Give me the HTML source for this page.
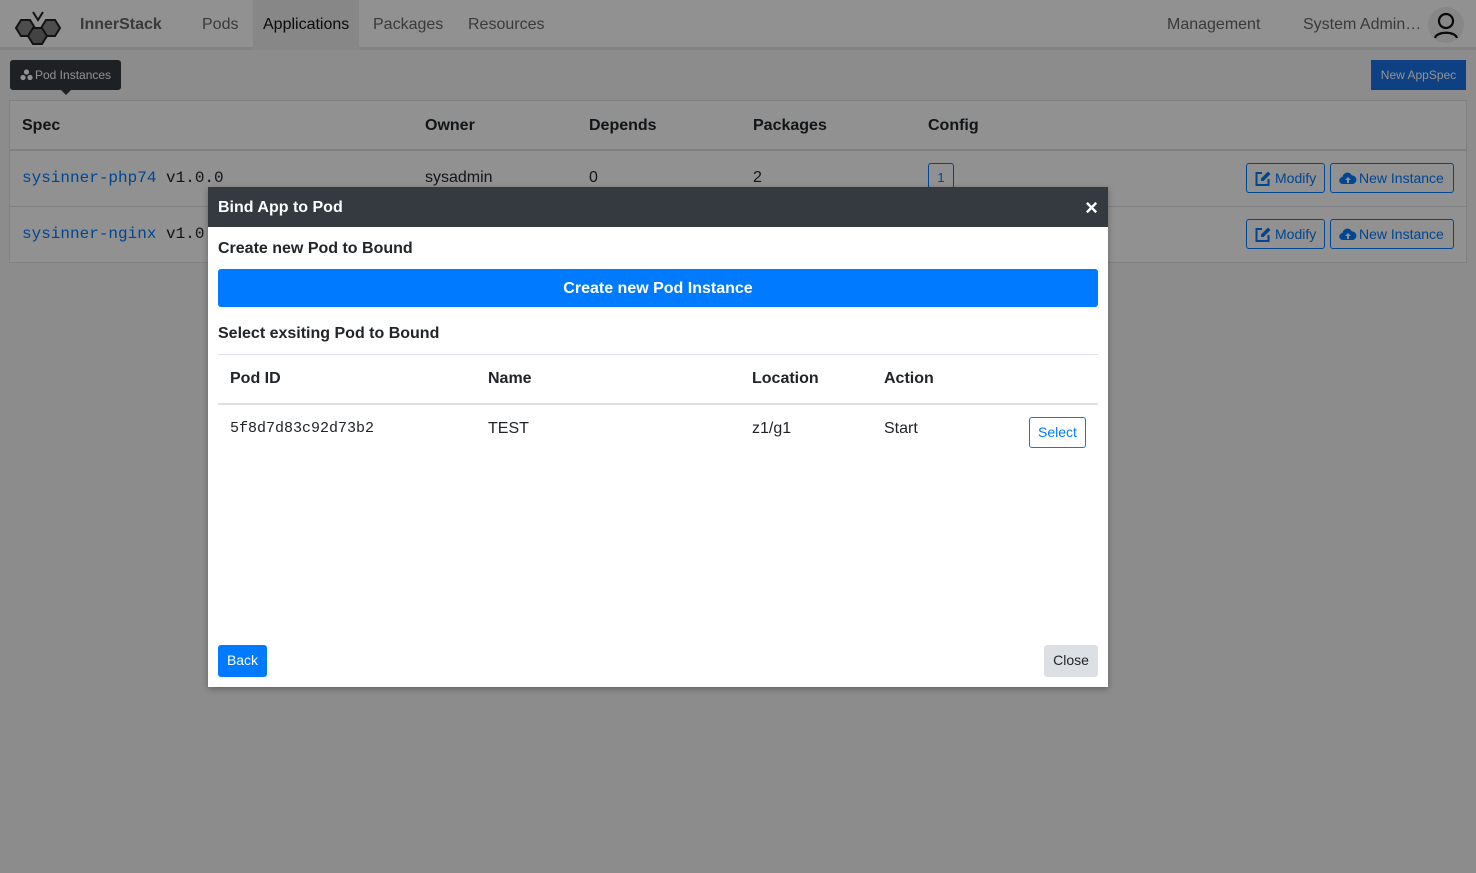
<!DOCTYPE html>
<html><head><style>
*{box-sizing:border-box;margin:0;padding:0}
body{width:1476px;height:873px;overflow:hidden;background:#f7f7f7;font-family:"Liberation Sans",sans-serif;color:#212529;position:relative;font-size:16px}
.nav{position:absolute;left:0;top:0;width:1476px;height:50px;background:#fff;border-bottom:3px solid #e6e6e6}
.nav span{position:absolute;top:16px;font-size:16px;color:#666}
.mono{font-family:"Liberation Mono",monospace}
.tbl{position:absolute;left:9px;top:100px;width:1458px;height:163px;background:#fff;border:1px solid #e3e3e3}
.th{position:absolute;top:16px;font-weight:bold}
.btn{position:absolute;border:1px solid #007bff;color:#007bff;border-radius:3px;font-size:14px;height:30px;line-height:28px;padding-left:28px}
.btn svg{position:absolute;left:8px;top:7px}
.ov{position:absolute;left:0;top:0;width:1476px;height:873px;background:rgba(0,0,0,.43)}
.modal{position:absolute;left:208px;top:187px;width:900px;height:500px;background:#fff;box-shadow:0 2px 6px rgba(0,0,0,.3)}
.mh{height:40px;background:#343a40;color:#fff;font-weight:bold;font-size:16px;padding:12px 10px}
.mb{position:absolute;font-size:16px}
</style></head><body>
<div class="nav">
<svg style="position:absolute;left:12px;top:8px" width="52" height="38" viewBox="0 0 52 38"><path d="M21 4l5 8 5-8" stroke="#222" stroke-width="2" fill="none"/><polygon points="4,20 9,12 18,12 23,20 18,28 9,28" fill="#888" stroke="#222" stroke-width="2"/><polygon points="29,20 34,12 43,12 48,20 43,28 34,28" fill="#888" stroke="#222" stroke-width="2"/><polygon points="16,28 21,20 30,20 35,28 30,36 21,36" fill="#777" stroke="#222" stroke-width="2"/></svg>
<span style="left:80px;font-weight:bold;font-size:16px">InnerStack</span>
<span style="left:202px">Pods</span>
<div style="position:absolute;left:253px;top:0;width:106px;height:50px;background:#eee"></div>
<span style="left:263px;color:#111">Applications</span>
<span style="left:373px">Packages</span>
<span style="left:468px">Resources</span>
<span style="left:1167px">Management</span>
<span style="left:1303px">System Admin…</span>
<svg style="position:absolute;left:1428px;top:7px" width="36" height="36" viewBox="0 0 36 36"><circle cx="18" cy="18" r="18" fill="#eee"/><circle cx="18" cy="14" r="7" stroke="#111" stroke-width="2.2" fill="none"/><path d="M7 31c2-7 20-7 22 0" stroke="#111" stroke-width="2.2" fill="none"/></svg>
</div>
<div style="position:absolute;left:10px;top:60px;width:111px;height:30px;background:#343a40;color:#fff;font-size:12px;line-height:30px;padding-left:25px;border-radius:3px">Pod Instances
<svg style="position:absolute;left:10px;top:9px" width="13" height="12" viewBox="0 0 13 12"><circle cx="6.5" cy="3" r="2.6" fill="#fff"/><circle cx="3" cy="8.5" r="2.6" fill="#fff"/><circle cx="10" cy="8.5" r="2.6" fill="#fff"/></svg></div>
<div style="position:absolute;left:61px;top:90px;border:5px solid transparent;border-top-color:#343a40"></div>
<div style="position:absolute;left:1371px;top:60px;width:95px;height:30px;background:#1a73e8;color:#fff;font-size:12px;line-height:30px;text-align:center">New AppSpec</div>
<div class="tbl">
<div class="th" style="left:12px">Spec</div><div class="th" style="left:415px">Owner</div><div class="th" style="left:579px">Depends</div><div class="th" style="left:743px">Packages</div><div class="th" style="left:918px">Config</div>
<div style="position:absolute;left:0;top:48px;width:100%;border-top:2px solid #dee2e6"></div>
<div style="position:absolute;left:0;top:105px;width:100%;border-top:1px solid #dee2e6"></div>
<div class="mono" style="position:absolute;left:12px;top:68px"><span style="color:#007bff">sysinner-php74</span> v1.0.0</div>
<div style="position:absolute;left:415px;top:68px">sysadmin</div><div style="position:absolute;left:579px;top:68px">0</div><div style="position:absolute;left:743px;top:68px">2</div>
<div style="position:absolute;left:918px;top:62px;width:26px;height:28px;border:1px solid #007bff;color:#007bff;font-size:13px;text-align:center;line-height:28px;border-radius:3px">1</div>
<div class="mono" style="position:absolute;left:12px;top:124px"><span style="color:#007bff">sysinner-nginx</span> v1.0</div>
<div class="btn" style="left:1236px;top:62px;width:79px"><svg width="16" height="15" viewBox="0 0 16 15"><path d="M7 2H1.5v12h12V8" stroke="#007bff" stroke-width="2" fill="none"/><path d="M13 0.5l2.5 2.5-7 7H6V7.5z" fill="#007bff"/></svg>Modify</div>
<div class="btn" style="left:1320px;top:62px;width:124px"><svg width="18" height="14" viewBox="0 0 18 14"><path d="M4 13a3.5 3.5 0 0 1-.5-7A5 5 0 0 1 13 4.5 4.3 4.3 0 0 1 14 13z" fill="#007bff"/><path d="M9 6l-3 3h2v3h2V9h2z" fill="#fff"/></svg>New Instance</div>
<div class="btn" style="left:1236px;top:118px;width:79px"><svg width="16" height="15" viewBox="0 0 16 15"><path d="M7 2H1.5v12h12V8" stroke="#007bff" stroke-width="2" fill="none"/><path d="M13 0.5l2.5 2.5-7 7H6V7.5z" fill="#007bff"/></svg>Modify</div>
<div class="btn" style="left:1320px;top:118px;width:124px"><svg width="18" height="14" viewBox="0 0 18 14"><path d="M4 13a3.5 3.5 0 0 1-.5-7A5 5 0 0 1 13 4.5 4.3 4.3 0 0 1 14 13z" fill="#007bff"/><path d="M9 6l-3 3h2v3h2V9h2z" fill="#fff"/></svg>New Instance</div>
</div>
<div class="ov"></div>
<div class="modal">
<div class="mh">Bind App to Pod<span style="position:absolute;right:10px;top:8px;font-size:22px">×</span></div>
<div class="mb" style="left:10px;top:53px;font-weight:bold">Create new Pod to Bound</div>
<div style="position:absolute;left:10px;top:82px;width:880px;height:38px;background:#007bff;border-radius:3px;color:#fff;font-weight:bold;text-align:center;line-height:39px">Create new Pod Instance</div>
<div class="mb" style="left:10px;top:138px;font-weight:bold">Select exsiting Pod to Bound</div>
<div style="position:absolute;left:10px;top:167px;width:880px;border-top:1px solid #dee2e6"></div>
<div class="mb" style="left:22px;top:183px;font-weight:bold">Pod ID</div><div class="mb" style="left:280px;top:183px;font-weight:bold">Name</div><div class="mb" style="left:544px;top:183px;font-weight:bold">Location</div><div class="mb" style="left:676px;top:183px;font-weight:bold">Action</div>
<div style="position:absolute;left:10px;top:216px;width:880px;border-top:2px solid #dee2e6"></div>
<div class="mb mono" style="left:22px;top:233px;font-size:15px">5f8d7d83c92d73b2</div><div class="mb" style="left:280px;top:233px">TEST</div><div class="mb" style="left:544px;top:233px">z1/g1</div><div class="mb" style="left:676px;top:233px">Start</div>
<div style="position:absolute;left:821px;top:230px;width:57px;height:31px;border:1px solid #007bff;color:#007bff;border-radius:3px;font-size:14px;text-align:center;line-height:29px">Select</div>
<div style="position:absolute;left:10px;top:458px;width:49px;height:32px;background:#007bff;color:#fff;border-radius:3px;font-size:14px;text-align:center;line-height:30px">Back</div>
<div style="position:absolute;left:836px;top:458px;width:54px;height:32px;background:#dcdfe3;color:#212529;border-radius:3px;font-size:14px;text-align:center;line-height:30px">Close</div>
</div>
</body></html>
